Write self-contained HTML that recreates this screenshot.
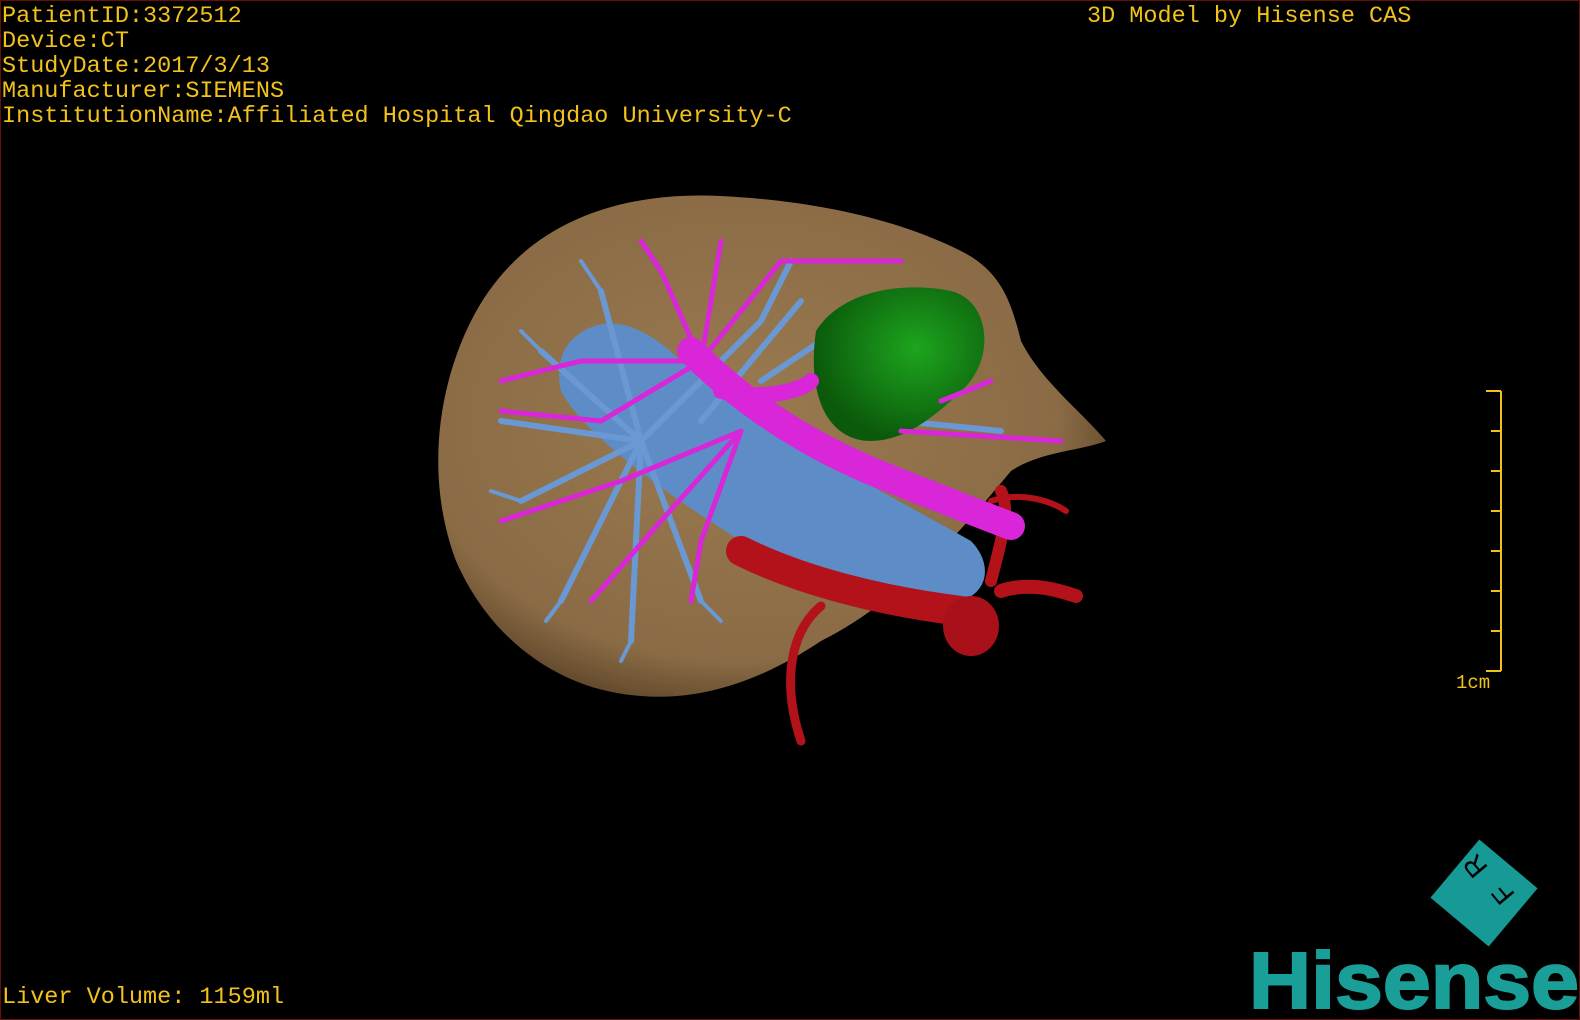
<!DOCTYPE html>
<html><head><meta charset="utf-8"><style>
html,body{margin:0;padding:0;background:#000;}
#c{position:relative;width:1580px;height:1020px;background:#000;overflow:hidden;box-sizing:border-box;border:1px solid #6a0d0d;}
.t{position:absolute;color:#f2c21c;font-family:"Liberation Mono",monospace;font-size:23.5px;line-height:25px;white-space:pre;}
</style></head><body><div id="c">
<div class="t" style="left:1px;top:3px">PatientID:3372512
Device:CT
StudyDate:2017/3/13
Manufacturer:SIEMENS
InstitutionName:Affiliated Hospital Qingdao University-C</div>
<div class="t" style="left:1086px;top:3px">3D Model by Hisense CAS</div>
<div class="t" style="left:1px;top:984px">Liver Volume: 1159ml</div>
<div class="t" style="left:1455px;top:670px;font-size:19px">1cm</div>
<svg width="1580" height="1020" style="position:absolute;left:0;top:0">
<defs>
<radialGradient id="lv" cx="0.45" cy="0.45" r="0.6"><stop offset="0" stop-color="#9a7a50"/><stop offset="0.8" stop-color="#8a6b45"/><stop offset="1" stop-color="#5a4228"/></radialGradient>
<radialGradient id="gr" cx="0.6" cy="0.4" r="0.6"><stop offset="0" stop-color="#1ea51e"/><stop offset="1" stop-color="#0b5a0b"/></radialGradient>
</defs>
<path d="M470 320 C520 220 620 190 720 195 C820 200 900 220 960 250 C1000 270 1010 300 1020 340 C1040 380 1080 410 1105 440 C1080 450 1040 450 1010 470 C960 530 900 600 820 640 C760 680 700 700 640 695 C560 690 490 640 455 560 C425 480 435 390 470 320 Z" fill="url(#lv)"/>
<path d="M570 340 C600 310 640 320 680 360 C760 430 900 500 970 540 C990 560 990 590 960 600 C900 610 820 590 740 540 C660 490 580 430 560 390 C555 370 560 350 570 340 Z" fill="#5e8cc7"/>
<g stroke="#6a98d2" stroke-width="6" fill="none" stroke-linecap="round">
<path d="M640 440 L600 290 M640 440 L540 350 M640 440 L500 420 M640 440 L520 500 M640 440 L560 600 M640 440 L630 640 M640 440 L700 600 M640 440 L760 320 L790 260 M700 420 L800 300 M760 380 L880 300 M900 420 L1000 430"/>
<path d="M600 290 L580 260 M540 350 L520 330 M520 500 L490 490 M560 600 L545 620 M630 640 L620 660 M700 600 L720 620" stroke-width="4"/>
</g>
<g stroke="#b3121a" fill="none" stroke-linecap="round">
<path d="M740 550 C800 580 880 600 960 610" stroke-width="30"/>
<path d="M990 580 C1000 540 1010 510 1000 490" stroke-width="12"/>
<path d="M1000 590 C1030 580 1060 590 1075 595" stroke-width="14"/>
<path d="M820 605 C790 630 780 680 800 740" stroke-width="9"/>
<path d="M990 500 C1020 490 1050 500 1065 510" stroke-width="6"/>
</g>
<ellipse cx="970" cy="625" rx="28" ry="30" fill="#a8101a"/>
<path d="M815 330 C840 290 900 280 950 290 C990 300 995 360 960 390 C930 420 900 440 870 440 C830 440 805 400 815 330 Z" fill="url(#gr)"/>
<g stroke="#d826d8" fill="none" stroke-linecap="round">
<path d="M690 350 C740 400 800 440 870 470 C920 490 970 510 1010 525" stroke-width="28"/>
<path d="M720 390 C760 400 800 390 810 380" stroke-width="16"/>
<g stroke-width="5">
<path d="M700 360 L660 270 L640 240 M700 360 L720 240 M700 360 L780 260 L900 260 M700 360 L580 360 L500 380 M700 360 L600 420 L500 410 M740 430 L620 480 L500 520 M740 430 L660 520 L590 600 M740 430 L700 540 L690 600 M900 430 L1060 440 M940 400 L990 380"/>
</g>
</g>
<g stroke="#f2c21c" stroke-width="2" fill="none"><path d="M1500 390 V670 M1485 390 H1500 M1490 430 H1500 M1490 470 H1500 M1490 510 H1500 M1490 550 H1500 M1490 590 H1500 M1490 630 H1500 M1485 670 H1500"/></g>
<g transform="translate(1483,892) rotate(40)"><rect x="-38" y="-38" width="76" height="76" fill="#179a96"/></g>
<text x="1468" y="880" font-family="Liberation Sans,sans-serif" font-size="28" fill="#000" transform="rotate(-130 1468 870)" text-anchor="middle" dominant-baseline="middle">R</text>
<text x="1496" y="908" font-family="Liberation Sans,sans-serif" font-size="28" fill="#000" transform="rotate(-130 1496 898)" text-anchor="middle" dominant-baseline="middle">F</text>
<text x="1248" y="1007" font-family="Liberation Sans,sans-serif" font-weight="bold" font-size="80" fill="#1a9e98" stroke="#1a9e98" stroke-width="2" textLength="330" lengthAdjust="spacingAndGlyphs">Hisense</text>
</svg>
</div></body></html>
